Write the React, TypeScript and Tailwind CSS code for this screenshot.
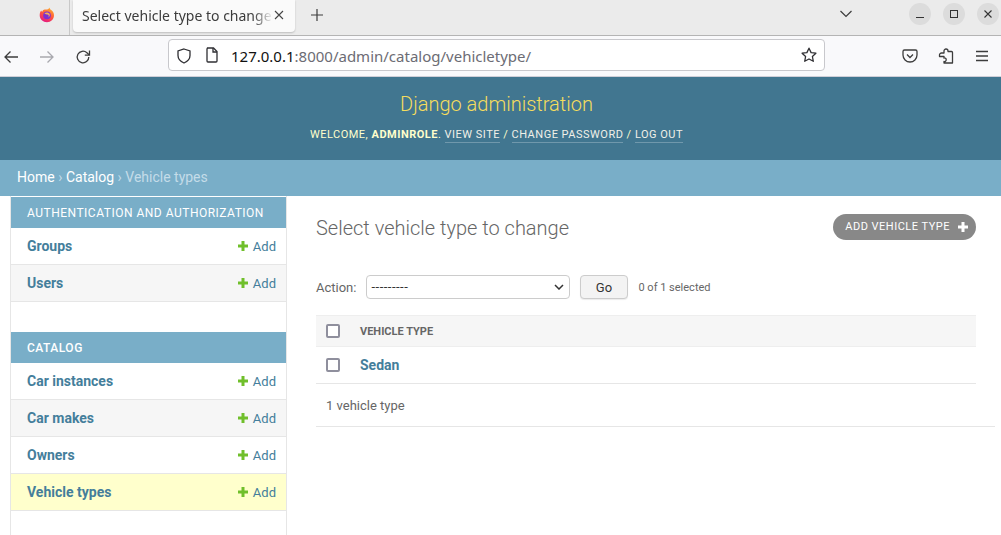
import React from "react";

const Plus = ({ className = "", color = "#70bf2b" }: { className?: string; color?: string }) => (
  <svg viewBox="0 0 10 10" className={className}>
    <path d="M3.500 0h3v3.500H10v3H6.500V10h-3V6.500H0v-3h3.500z" fill={color} />
  </svg>
);

const FirefoxLogo = () => (
  <svg viewBox="0 0 16 16" className="w-[16px] h-[16px]">
    <defs>
      <linearGradient id="ffa" x1="0.800" y1="0" x2="0.300" y2="1">
        <stop offset="0" stopColor="#ffb52e" />
        <stop offset="0.5" stopColor="#ff5a3a" />
        <stop offset="1" stopColor="#e31587" />
      </linearGradient>
    </defs>
    <path d="M10.500 0.400c.2 1.400 1 2 2 2.900 1.600 1.400 2.500 3 2.500 5 0 3.800-3.100 7-7 7s-7.300-3-7.300-7c0-1.900.5-3.600 1.500-4.700.2.700.5 1.100 1 1.400C3.400 3.200 5 2.300 6.300 2.600 8 2.700 9.800 2 10.500.4z" fill="url(#ffa)" />
    <circle cx="8" cy="8.400" r="3.800" fill="#7b2fd0" />
    <path d="M5.400 6.500c1.200-1.400 3.800-1.500 5 .1.900 1.300.4 3.300-1.200 3.900 1-1 .7-2.500-.5-2.900-1-.3-2.200-.2-3.300-1.100z" fill="#ffbd4f" opacity="0.9" />
  </svg>
);

const SidebarRow = ({ name, alt, current }: { name: string; alt?: boolean; current?: boolean }) => (
  <div
    className={`flex h-[37px] items-center justify-between border-b border-[#e6e6e6] pl-[16px] pr-[10px] text-[14px] ${
      current ? "bg-[#ffffcc]" : alt ? "bg-[#f6f6f6]" : "bg-white"
    }`}
  >
    <span className="font-bold text-[#447e9b]">{name}</span>
    <span className="flex items-center text-[13px] text-[#447e9b]">
      <Plus className="w-[10px] h-[10px] mr-[5px] ml-[-1px]" />
      <span className="pt-[2px]">Add</span>
    </span>
  </div>
);

const Caption = ({ children, bold }: { children: React.ReactNode; bold?: boolean }) => (
  <div
    className={`flex h-[31px] items-center bg-[#79aec8] pl-[16px] text-[12px] tracking-[0.5px] text-white ${
      bold ? "font-medium" : ""
    }`}
  >
    {children}
  </div>
);

const Check = () => <span className="block w-[14px] h-[14px] rounded-[2px] border-2 border-[#8f8f9d] bg-white" />;

export default function App() {
  return (
    <div className="w-[1001px] h-[535px] overflow-hidden bg-white font-['Roboto',sans-serif] text-[#333]">
      {/* Tab strip */}
      <div className="flex h-[36px] items-start bg-[#ebebeb] border-b border-[#b4b4b4]">
        <div className="flex h-[35px] w-[70px] items-center justify-end border-r border-[#c8c8c8] pr-[14px]">
          <div className="relative top-[-3px]">
            <FirefoxLogo />
          </div>
        </div>
        <div className="ml-[3px] flex h-[32px] w-[222px] items-center rounded-b-[4px] bg-[#fafafa] pl-[9px] pb-[2px] shadow-[0_1px_2px_rgba(0,0,0,0.2)] font-['Noto_Sans',sans-serif] text-[14px] text-[#3c3c3c]">
          <span className="w-[191px] overflow-hidden whitespace-nowrap [mask-image:linear-gradient(to_left,transparent,black_20px)]">
            Select vehicle type to change
          </span>
          <svg viewBox="0 0 10 10" className="w-[10px] h-[10px] ml-[1px]" stroke="#444" strokeWidth="1.100" fill="none">
            <path d="M1 1l8 8M9 1l-8 8" />
          </svg>
        </div>
        <svg viewBox="0 0 12 12" className="w-[12px] h-[12px] ml-[16px] mt-[9px]" stroke="#3c3c3c" strokeWidth="1.200" fill="none">
          <path d="M6 0v12M0 6h12" />
        </svg>
        <div className="ml-auto flex items-start">
          <svg viewBox="0 0 12 8" className="w-[12px] h-[8px] mt-[10px] mr-[57px]" stroke="#3c3c3c" strokeWidth="1.200" fill="none">
            <path d="M0.500 1l5.500 5.500L11.500 1" />
          </svg>
          <div className="mt-[3px] mr-[2px] flex gap-[12px]">
            <div className="flex w-[22px] h-[22px] items-center justify-center rounded-full bg-[#dcdcdc]">
              <svg viewBox="0 0 8 8" className="w-[8px] h-[8px]" stroke="#333" strokeWidth="1" fill="none">
                <path d="M0 7.500h8" />
              </svg>
            </div>
            <div className="flex w-[22px] h-[22px] items-center justify-center rounded-full bg-[#dcdcdc]">
              <svg viewBox="0 0 8 8" className="w-[8px] h-[8px]" stroke="#333" strokeWidth="1" fill="none">
                <rect x="0.500" y="0.500" width="7" height="7" />
              </svg>
            </div>
            <div className="flex w-[22px] h-[22px] items-center justify-center rounded-full bg-[#dcdcdc]">
              <svg viewBox="0 0 8 8" className="w-[8px] h-[8px]" stroke="#333" strokeWidth="1.100" fill="none">
                <path d="M0.500 0.500l7 7M7.500 0.500l-7 7" />
              </svg>
            </div>
          </div>
        </div>
      </div>
      {/* Toolbar */}
      <div className="flex h-[41px] items-center bg-[#f9f9fb] border-b border-[#cfcfd8]">
        <svg viewBox="0 0 16 16" className="w-[16px] h-[16px] ml-[3px] mt-[2px]" stroke="#3c3c3c" strokeWidth="1.300" fill="none">
          <path d="M15 8H2M7.500 2.500L2 8l5.500 5.500" />
        </svg>
        <svg viewBox="0 0 16 16" className="w-[16px] h-[16px] ml-[20px] mt-[2px]" stroke="#a9a9ae" strokeWidth="1.300" fill="none">
          <path d="M1 8h13M8.500 2.500L14 8l-5.500 5.500" />
        </svg>
        <svg viewBox="0 0 16 16" className="w-[16px] h-[16px] ml-[20px] mt-[2px]" stroke="#3c3c3c" strokeWidth="1.300" fill="none">
          <path d="M13.800 8a5.800 5.800 0 1 1-1.900-4.300L14 5.800" />
          <path d="M14.500 1.500v4.700H9.800" />
        </svg>
        <div className="ml-[77px] flex h-[32px] w-[657px] items-center rounded-[4px] border border-[#c8c8cc] bg-white relative top-[-1px]">
          <svg viewBox="0 0 16 16" className="w-[16px] h-[16px] ml-[7px] mt-[2px]" stroke="#2f2f33" strokeWidth="1.300" fill="none">
            <path d="M8 1l6 2v4.500c0 3.500-2.500 6-6 7.500-3.500-1.500-6-4-6-7.500V3z" />
          </svg>
          <svg viewBox="0 0 14 16" className="w-[14px] h-[16px] ml-[13px]" stroke="#2f2f33" strokeWidth="1.300" fill="none">
            <path d="M2 1h6.500L12 4.500V14a1 1 0 0 1-1 1H3a1 1 0 0 1-1-1V2a1 1 0 0 1 1-1z" />
            <path d="M8 1v4h4" />
          </svg>
          <span className="ml-[12px] pt-[2px] font-['Noto_Sans',sans-serif] text-[15px] text-[#6c6c74]">
            <span className="text-[#111]">127.0.0.1</span>:8000/admin/catalog/vehicletype/
          </span>
          <svg viewBox="0 0 16 16" className="w-[16px] h-[16px] ml-auto mr-[7px]" stroke="#2f2f33" strokeWidth="1.300" fill="none">
            <path d="M8 1.200l2.100 4.400 4.800.6-3.500 3.300.9 4.800L8 12l-4.300 2.300.9-4.800L1.100 6.200l4.800-.6z" strokeLinejoin="round" />
          </svg>
        </div>
        <svg viewBox="0 0 16 16" className="w-[16px] h-[16px] ml-[77px]" stroke="#3c3c3c" strokeWidth="1.300" fill="none">
          <path d="M2.500 2h11a1.500 1.500 0 0 1 1.500 1.500V7a7 7 0 0 1-14 0V3.500A1.500 1.500 0 0 1 2.500 2z" />
          <path d="M5 6.500L8 9.500l3-3" />
        </svg>
        <svg viewBox="0 0 16 16" className="w-[16px] h-[16px] ml-[20px]" stroke="#3c3c3c" strokeWidth="1.300" fill="none">
          <path d="M6 3.500V3a2 2 0 0 1 4 0v.5h3.500a1 1 0 0 1 1 1V15H6v-1.500a1.800 1.800 0 1 0 0-3.500V8.500H1.500V7a2 2 0 0 1 2-2H6z" strokeLinejoin="round" />
        </svg>
        <svg viewBox="0 0 14 12" className="w-[14px] h-[12px] ml-[21px]" stroke="#3c3c3c" strokeWidth="1.300" fill="none">
          <path d="M1 1.500h12M1 6h12M1 10.500h12" />
        </svg>
      </div>
      {/* Django header */}
      <div className="flex h-[83px] flex-col items-center bg-[#417690] pr-[8px]">
        <div className="mt-[14px] text-[20px] leading-[26px] font-light text-[#f5dd5d]">Django administration</div>
        <div className="mt-[11px] text-[11px] leading-[14px] tracking-[0.5px] uppercase text-[#ffffcc]">
          Welcome, <strong className="font-bold">adminrole</strong>.{" "}
          <span className="border-b border-[rgba(255,255,255,0.25)] text-[#f0f0e8] pb-[1px]">View site</span> /{" "}
          <span className="border-b border-[rgba(255,255,255,0.25)] text-[#f0f0e8] pb-[1px]">Change password</span> /{" "}
          <span className="border-b border-[rgba(255,255,255,0.25)] text-[#f0f0e8] pb-[1px]">Log out</span>
        </div>
      </div>
      {/* Breadcrumbs */}
      <div className="flex h-[36px] items-center bg-[#79aec8] pl-[17px] pb-[2px] text-[14px] text-white">
        <span>Home</span>
        <span className="text-[#c4dce8] mx-[3.500px]">›</span>
        <span>Catalog</span>
        <span className="text-[#c4dce8] ml-[3.500px]">› Vehicle types</span>
      </div>
      {/* Body */}
      <div className="flex">
        <div className="ml-[10px] h-[340px] w-[277px] shrink-0 border-x border-[#e6e6e6] pt-[1px]">
          <Caption>AUTHENTICATION AND AUTHORIZATION</Caption>
          <SidebarRow name="Groups" />
          <SidebarRow name="Users" alt />
          <div className="mt-[30px]">
            <Caption bold>CATALOG</Caption>
          </div>
          <SidebarRow name="Car instances" />
          <SidebarRow name="Car makes" alt />
          <SidebarRow name="Owners" />
          <SidebarRow name="Vehicle types" current />
        </div>
        <div className="ml-[29px] w-[679px] shrink-0">
          <div className="flex w-[660px] items-start justify-between pt-[17px]">
            <h1 className="text-[20px] leading-[30px] font-light text-[#666]">Select vehicle type to change</h1>
            <div className="mt-[1px] flex h-[26px] items-center rounded-[13px] bg-[#888] pl-[12px] pr-[8px] text-[11px] tracking-[0.5px] text-white">
              ADD VEHICLE TYPE
              <Plus className="w-[10px] h-[10px] ml-[8px]" color="#fff" />
            </div>
          </div>
          <div className="mt-[32px] flex h-[24px] w-[660px] items-center text-[13px] text-[#666]">
            <span className="pt-[2px]">Action:</span>
            <div className="ml-[10px] flex h-[24px] w-[204px] items-center justify-between rounded-[4px] border border-[#ccc] bg-white pl-[4px] pr-[5px] text-[#333]">
              <span className="text-[13px] tracking-[0.5px]">---------</span>
              <svg viewBox="0 0 10 6" className="w-[10px] h-[6px]" stroke="#333" strokeWidth="1.500" fill="none">
                <path d="M1 1l4 4 4-4" />
              </svg>
            </div>
            <div className="ml-[10px] flex h-[24px] w-[48px] items-center justify-center rounded-[4px] border border-[#ccc] bg-[#f3f3f3] pt-[2px] pr-[1px] text-[#333] shadow-[0_1px_1px_rgba(0,0,0,0.08)]">
              Go
            </div>
            <span className="ml-[10px] pt-[2px] text-[11px] text-[#666]">0 of 1 selected</span>
          </div>
          <div className="mt-[16px] w-[660px]">
            <div className="flex h-[32px] items-center border-y border-[#eee] bg-[#f6f6f6] pl-[10px]">
              <Check />
              <span className="ml-[20px] pt-[2px] text-[11px] font-bold text-[#666]">VEHICLE TYPE</span>
            </div>
            <div className="flex h-[37px] items-center border-b border-[#e6e6e6] pl-[10px]">
              <Check />
              <span className="ml-[20px] text-[14px] font-bold text-[#447e9b]">Sedan</span>
            </div>
          </div>
          <div className="flex h-[43px] items-center border-b border-[#e6e6e6] pl-[10px] pt-[2px] text-[13px] text-[#666]">1 vehicle type</div>
        </div>
      </div>
    </div>
  );
}
